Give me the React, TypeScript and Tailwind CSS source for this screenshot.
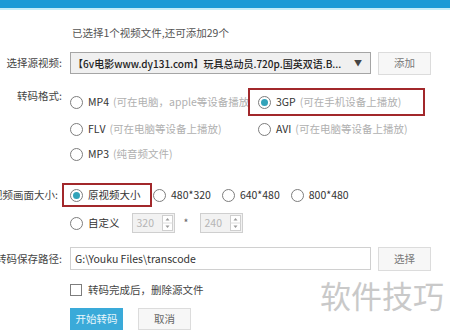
const font = { fontFamily: '"Noto Sans CJK SC", "Noto Sans", sans-serif' };

function Radio({ checked = false }: { checked?: boolean }) {
  return (
    <span className="flex h-[13px] w-[13px] shrink-0 items-center justify-center rounded-full border border-[#7d7d7d] bg-white">
      {checked && <span className="h-[7px] w-[7px] rounded-full bg-[#33a3b9]" />}
    </span>
  );
}

function Option({ label, desc, checked }: { label: string; desc?: string; checked?: boolean }) {
  return (
    <div className="flex items-center whitespace-nowrap">
      <Radio checked={checked} />
      <span className="ml-[5px] text-[#333]">{label}</span>
      {desc && <span className="ml-[4px] text-[#b0b0b0]">{desc}</span>}
    </div>
  );
}

function Label({ children }: { children: string }) {
  return <div className="flex w-[62px] shrink-0 justify-end whitespace-nowrap text-[#444]">{children}</div>;
}

function Spin({ value }: { value: string }) {
  return (
    <div className="flex h-[20px] w-[43px] items-center border border-[#cfcfcf] bg-[#f2f2f2]">
      <span className="flex-1 pl-[4px] text-[#b5b5b5]">{value}</span>
      <svg width="11" height="16" viewBox="0 0 11 16" className="mr-[1px]">
        <rect x="0.5" y="0.5" width="10" height="15" fill="#fff" stroke="#cfcfcf" />
        <line x1="0.5" y1="8" x2="10.5" y2="8" stroke="#dcdcdc" />
        <path d="M3.5 5.5 L5.5 3 L7.5 5.5 Z" fill="#999" />
        <path d="M3.5 10.5 L5.5 13 L7.5 10.5 Z" fill="#999" />
      </svg>
    </div>
  );
}

export default function App() {
  return (
    <div className="relative h-[332px] w-[450px] overflow-hidden bg-white text-[10.5px]" style={font}>
      <div className="h-[8px] bg-[#1b9ad6]" />
      <div className="h-[2px] bg-[#c4ecf8]" />

      <div className="mt-[13px] flex h-[20px] items-center pl-[72px] text-[#555]">已选择1个视频文件,还可添加29个</div>

      <div className="mt-[9px] flex h-[22px] items-center">
        <Label>选择源视频:</Label>
        <div className="ml-[8px] flex h-[22px] w-[301px] items-center border border-[#a5a5a5] bg-[#f0f0f0] pl-[2px] pr-[8px]">
          <span className="flex-1 whitespace-nowrap text-[10px] font-medium text-[#222]">【6v电影www.dy131.com】玩具总动员.720p.国英双语.B...</span>
          <span className="ml-[4px] text-[8px] text-[#444]">▼</span>
        </div>
        <button className="ml-[7px] h-[23px] w-[53px] border border-[#dcdcdc] bg-[#f7f7f7] text-[#777]">添加</button>
      </div>

      <div className="mt-[14px] flex">
        <Label>转码格式:</Label>
        <div className="ml-[8px] grid grid-cols-[178px_177px]">
          <div className="flex h-[28px] items-center overflow-hidden">
            <Option label="MP4" desc="(可在电脑，apple等设备播放)" />
          </div>
          <div className="flex h-[28px] items-center border-2 border-[#a2282b] pl-[8px]">
            <Option label="3GP" desc="(可在手机设备上播放)" checked />
          </div>
          <div className="mt-[3px] flex h-[20px] items-center">
            <Option label="FLV" desc="(可在电脑等设备上播放)" />
          </div>
          <div className="mt-[3px] flex h-[20px] items-center pl-[10px]">
            <Option label="AVI" desc="(可在电脑等设备上播放)" />
          </div>
          <div className="mt-[5px] flex h-[20px] items-center">
            <Option label="MP3" desc="(纯音频文件)" />
          </div>
        </div>
      </div>

      <div className="mt-[19px] flex h-[24px] items-center">
        <div className="flex w-[58px] shrink-0 justify-end whitespace-nowrap text-[#444]">视频画面大小:</div>
        <div className="relative ml-[4px] flex h-[24px] w-[90px] items-center border-2 border-[#a2282b] bg-white pl-[6px]">
          <Option label="原视频大小" checked />
        </div>
        <div className="ml-[1px] flex items-center gap-[11px]">
          <Option label="480*320" />
          <Option label="640*480" />
          <Option label="800*480" />
        </div>
      </div>

      <div className="mt-[6px] flex h-[20px] items-center pl-[70px]">
        <Option label="自定义" />
        <div className="ml-[12px]">
          <Spin value="320" />
        </div>
        <span className="ml-[9px] w-[16px] text-[#666]">*</span>
        <Spin value="240" />
      </div>

      <div className="mt-[14px] flex h-[23px] items-center">
        <Label>转码保存路径:</Label>
        <div className="ml-[8px] flex h-[23px] w-[301px] items-center border border-[#d0d0d0] bg-white pl-[4px] text-[#333]">G:\Youku Files\transcode</div>
        <button className="ml-[7px] h-[24px] w-[53px] border border-[#dcdcdc] bg-[#f7f7f7] text-[#777]">选择</button>
      </div>

      <div className="mt-[10px] flex h-[20px] items-center pl-[70px]">
        <span className="h-[12px] w-[12px] border border-[#7d7d7d] bg-white" />
        <span className="ml-[6px] text-[#444]">转码完成后，删除源文件</span>
      </div>

      <div className="mt-[8px] flex items-center pl-[70px]">
        <button className="h-[22px] w-[53px] bg-[#3aaad9] text-[#e8f6fc]">开始转码</button>
        <button className="ml-[15px] h-[22px] w-[53px] border border-[#dcdcdc] bg-[#f7f7f7] text-[#666]">取消</button>
      </div>

      <div className="pointer-events-none absolute left-[320px] top-[279px] text-[31px] leading-none text-[#c9c9c9]">软件技巧</div>
    </div>
  );
}
